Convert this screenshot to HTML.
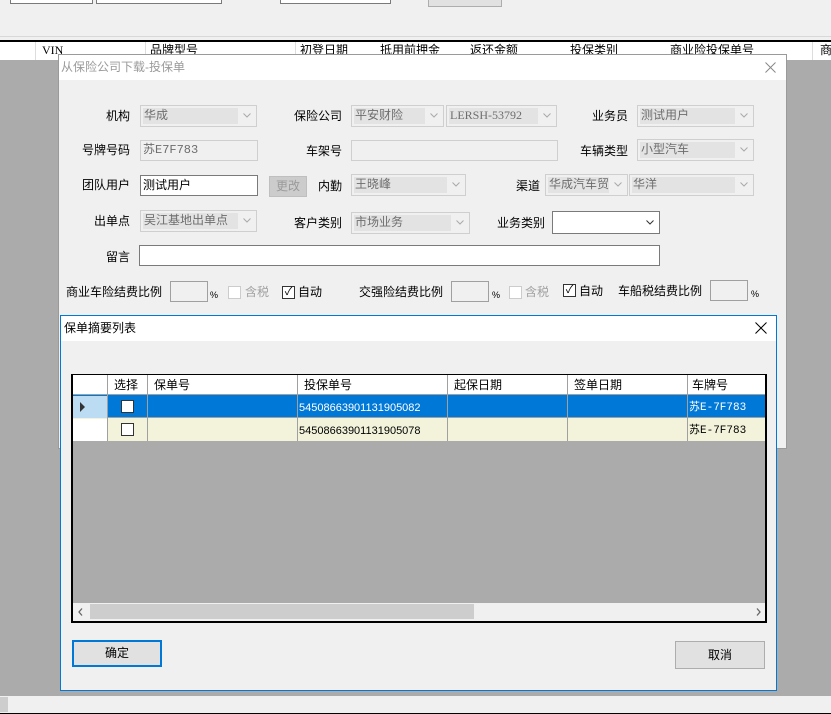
<!DOCTYPE html>
<html><head><meta charset="utf-8"><style>
*{margin:0;padding:0;box-sizing:border-box}
body{width:831px;height:714px;overflow:hidden;background:#ababab;position:relative;font-family:"Liberation Sans","Noto Sans CJK SC",sans-serif;font-size:12px;color:#000}
.a{position:absolute}
.lbl{position:absolute;white-space:nowrap;font-size:12px;line-height:14px}
.cb{position:absolute;height:22px;border:1px solid #cfcfcf;background:#f0f0f0}
.cb .in{position:absolute;left:2px;top:2px;bottom:2px;right:18px;background:#e3e3e3;color:#6d6d6d;padding-left:1px;line-height:15px;white-space:nowrap;overflow:hidden}
.cb svg,.wc svg{position:absolute;right:5px;top:7px}
.tb{position:absolute;height:21px;border:1px solid #cfcfcf;background:#f0f0f0;color:#6d6d6d;padding:2px 2px;line-height:15px}
.chk{position:absolute;width:13px;height:13px;border:1px solid #333;background:#fff}
.chk.d{border-color:#ccc}
.pct{position:absolute;width:38px;height:21px;border:1px solid #a0a0a0;background:#f0f0f0}
.g{position:absolute;top:0;height:100%;border-right:1px solid #a0a0a0}
</style></head><body>
<div class="a" style="left:0;top:0;width:831px;height:40px;background:#f0f0f0"></div>
<div class="a" style="left:10px;top:-1px;width:83px;height:5px;border:1px solid #7a7a7a;background:#fff"></div>
<div class="a" style="left:96px;top:-1px;width:126px;height:5px;border:1px solid #7a7a7a;background:#fff"></div>
<div class="a" style="left:280px;top:-1px;width:111px;height:5px;border:1px solid #7a7a7a;background:#fff"></div>
<div class="a" style="left:428px;top:-1px;width:74px;height:8px;border:1px solid #adadad;background:#e1e1e1"></div>
<div class="a" style="left:0;top:36px;width:831px;height:1px;background:#d8d8d8"></div>
<div class="a" style="left:0;top:40px;width:831px;height:2px;background:#000"></div>
<div class="a" style="left:0;top:42px;width:831px;height:18px;background:#fff;font-size:12px;line-height:16px">
<span class="a" style="left:42px;font-family:'Liberation Serif',serif">VIN</span><span class="a" style="left:150px">品牌型号</span><span class="a" style="left:300px">初登日期</span><span class="a" style="left:380px">抵用前押金</span><span class="a" style="left:470px">返还金额</span><span class="a" style="left:570px">投保类别</span><span class="a" style="left:670px">商业险投保单号</span><span class="a" style="left:820px">商</span>
<div class="a" style="left:35px;top:0;width:1px;height:18px;background:#ddd"></div><div class="a" style="left:145px;top:0;width:1px;height:18px;background:#ddd"></div><div class="a" style="left:295px;top:0;width:1px;height:18px;background:#ddd"></div><div class="a" style="left:812px;top:0;width:1px;height:18px;background:#ddd"></div>
</div>
<div class="a" style="left:58px;top:54px;width:729px;height:395px;border:1px solid #9a9a9a;background:#f0f0f0">
 <div class="a" style="left:0;top:0;width:727px;height:25px;background:#fff"></div>
 <div class="lbl" style="left:2px;top:5px;color:#9a9a9a">从保险公司下载-投保单</div>
 <svg class="a" style="left:706px;top:7px" width="11" height="11"><path d="M0.5 0.5L10.5 10.5M10.5 0.5L0.5 10.5" stroke="#888" stroke-width="1"/></svg>
</div>
<div class="lbl" style="left:106px;top:109px">机构</div>
<div class="cb" style="left:140px;top:105px;width:117px"><div class="in">华成</div><svg width="8" height="5"><path d="M0.5 0.5L4 4L7.5 0.5" stroke="#aaa" fill="none"/></svg></div>
<div class="lbl" style="left:294px;top:109px">保险公司</div>
<div class="cb" style="left:351px;top:105px;width:93px"><div class="in">平安财险</div><svg width="8" height="5"><path d="M0.5 0.5L4 4L7.5 0.5" stroke="#aaa" fill="none"/></svg></div>
<div class="cb" style="left:446px;top:105px;width:111px"><div class="in" style="font-family:'Liberation Serif',serif">LERSH-53792</div><svg width="8" height="5"><path d="M0.5 0.5L4 4L7.5 0.5" stroke="#aaa" fill="none"/></svg></div>
<div class="lbl" style="left:592px;top:109px">业务员</div>
<div class="cb" style="left:637px;top:105px;width:117px"><div class="in">测试用户</div><svg width="8" height="5"><path d="M0.5 0.5L4 4L7.5 0.5" stroke="#aaa" fill="none"/></svg></div>

<div class="lbl" style="left:82px;top:143px">号牌号码</div>
<div class="tb" style="left:140px;top:140px;width:118px;font-family:'Liberation Mono','Noto Sans CJK SC',monospace">苏E7F783</div>
<div class="lbl" style="left:306px;top:144px">车架号</div>
<div class="tb" style="left:351px;top:140px;width:207px"></div>
<div class="lbl" style="left:580px;top:144px">车辆类型</div>
<div class="cb" style="left:637px;top:139px;width:117px"><div class="in">小型汽车</div><svg width="8" height="5"><path d="M0.5 0.5L4 4L7.5 0.5" stroke="#aaa" fill="none"/></svg></div>

<div class="lbl" style="left:82px;top:178px">团队用户</div>
<div class="tb" style="left:140px;top:175px;width:118px;border-color:#7a7a7a;background:#fff;color:#000">测试用户</div>
<div class="a" style="left:269px;top:176px;width:38px;height:21px;background:#ccc;border:1px solid #bfbfbf;color:#9a9a9a;text-align:center;line-height:18px">更改</div>
<div class="lbl" style="left:318px;top:179px">内勤</div>
<div class="cb" style="left:351px;top:174px;width:115px"><div class="in">王晓峰</div><svg width="8" height="5"><path d="M0.5 0.5L4 4L7.5 0.5" stroke="#aaa" fill="none"/></svg></div>
<div class="lbl" style="left:516px;top:179px">渠道</div>
<div class="cb" style="left:545px;top:174px;width:83px"><div class="in">华成汽车贸</div><svg width="8" height="5"><path d="M0.5 0.5L4 4L7.5 0.5" stroke="#aaa" fill="none"/></svg></div>
<div class="cb" style="left:629px;top:174px;width:125px"><div class="in">华洋</div><svg width="8" height="5"><path d="M0.5 0.5L4 4L7.5 0.5" stroke="#aaa" fill="none"/></svg></div>

<div class="lbl" style="left:94px;top:214px">出单点</div>
<div class="cb" style="left:140px;top:210px;width:117px"><div class="in">吴江基地出单点</div><svg width="8" height="5"><path d="M0.5 0.5L4 4L7.5 0.5" stroke="#aaa" fill="none"/></svg></div>
<div class="lbl" style="left:294px;top:216px">客户类别</div>
<div class="cb" style="left:351px;top:212px;width:119px"><div class="in">市场业务</div><svg width="8" height="5"><path d="M0.5 0.5L4 4L7.5 0.5" stroke="#aaa" fill="none"/></svg></div>
<div class="lbl" style="left:497px;top:216px">业务类别</div>
<div class="a wc" style="left:552px;top:211px;width:108px;height:23px;border:1px solid #7a7a7a;background:#fff"><svg width="8" height="5" style="top:8px"><path d="M0.5 0.5L4 4L7.5 0.5" stroke="#333" fill="none"/></svg></div>

<div class="lbl" style="left:106px;top:250px">留言</div>
<div class="a" style="left:139px;top:245px;width:521px;height:21px;border:1px solid #7a7a7a;background:#fff"></div>

<div class="lbl" style="left:66px;top:285px">商业车险结费比例</div>
<div class="pct" style="left:170px;top:281px"></div>
<div class="lbl" style="left:210px;top:288px;font-size:9px">%</div>
<div class="chk d" style="left:228px;top:286px"></div>
<div class="lbl" style="left:245px;top:285px;color:#a0a0a0">含税</div>
<div class="chk" style="left:282px;top:286px;font-size:11px;line-height:11px;text-align:center">✓</div>
<div class="lbl" style="left:298px;top:285px">自动</div>
<div class="lbl" style="left:359px;top:285px">交强险结费比例</div>
<div class="pct" style="left:451px;top:281px"></div>
<div class="lbl" style="left:492px;top:288px;font-size:9px">%</div>
<div class="chk d" style="left:509px;top:286px"></div>
<div class="lbl" style="left:525px;top:285px;color:#a0a0a0">含税</div>
<div class="chk" style="left:563px;top:284px;font-size:11px;line-height:11px;text-align:center">✓</div>
<div class="lbl" style="left:579px;top:284px">自动</div>
<div class="lbl" style="left:618px;top:284px">车船税结费比例</div>
<div class="pct" style="left:710px;top:280px"></div>
<div class="lbl" style="left:751px;top:287px;font-size:9px">%</div>

<div class="a" style="left:60px;top:315px;width:717px;height:376px;border:1px solid #0078d7;background:#f0f0f0">
 <div class="a" style="left:0;top:0;width:715px;height:25px;background:#fff"></div>
 <div class="lbl" style="left:3px;top:5px;color:#000">保单摘要列表</div>
 <svg class="a" style="left:694px;top:6px" width="12" height="12"><path d="M0.5 0.5L11.5 11.5M11.5 0.5L0.5 11.5" stroke="#000" stroke-width="1"/></svg>
</div>
<div class="a" style="left:71px;top:374px;width:696px;height:249px;border:1px solid #000;border-width:1px 2px 2px 2px;background:#ababab">
 <div class="a" style="left:0;top:0;width:692px;height:66px;overflow:hidden">
  <div class="a" style="left:0;top:0;width:694px;height:20px;background:#fff;border-bottom:1px solid #a0a0a0"></div>
  <div class="a" style="left:0;top:20px;width:694px;height:23px;background:#0078d7;border-bottom:1px solid #a0a0a0"></div>
  <div class="a" style="left:0;top:43px;width:694px;height:23px;background:#f3f3dc"></div>
  <div class="a" style="left:0;top:21px;width:35px;height:22px;background:#bcdcf4"></div>
  <div class="a" style="left:0;top:44px;width:35px;height:22px;background:#fff"></div>
  <div class="a" style="left:7px;top:27px;width:0;height:0;border-left:5px solid #333;border-top:5px solid transparent;border-bottom:5px solid transparent"></div>
  <div class="g" style="left:0;width:35px"></div>
  <div class="g" style="left:35px;width:40px"></div>
  <div class="g" style="left:75px;width:150px"></div>
  <div class="g" style="left:225px;width:150px"></div>
  <div class="g" style="left:375px;width:120px"></div>
  <div class="g" style="left:495px;width:120px"></div>
  <div class="lbl" style="left:41px;top:3px">选择</div>
  <div class="lbl" style="left:81px;top:3px">保单号</div>
  <div class="lbl" style="left:231px;top:3px">投保单号</div>
  <div class="lbl" style="left:381px;top:3px">起保日期</div>
  <div class="lbl" style="left:501px;top:3px">签单日期</div>
  <div class="lbl" style="left:619px;top:3px">车牌号</div>
  <div class="chk" style="left:48px;top:25px"></div>
  <div class="chk" style="left:48px;top:48px"></div>
  <div class="lbl" style="left:226px;top:26px;color:#fff;font-size:11px">54508663901131905082</div>
  <div class="lbl" style="left:226px;top:49px;font-size:11px">54508663901131905078</div>
  <div class="lbl" style="left:616px;top:26px;color:#fff;font-family:'Liberation Mono','Noto Sans CJK SC',monospace;font-size:11px">苏E-7F783</div>
  <div class="lbl" style="left:616px;top:49px;font-family:'Liberation Mono','Noto Sans CJK SC',monospace;font-size:11px">苏E-7F783</div>
 </div>
 <div class="a" style="left:0;top:228px;width:692px;height:18px;background:#f0f0f0">
  <div class="a" style="left:17px;top:1px;width:384px;height:15px;background:#cdcdcd"></div>
  <svg class="a" style="left:5px;top:5px" width="5" height="8"><path d="M4 0.5L1 4L4 7.5" stroke="#666" fill="none" stroke-width="1.3"/></svg>
  <svg class="a" style="left:683px;top:5px" width="5" height="8"><path d="M1 0.5L4 4L1 7.5" stroke="#666" fill="none" stroke-width="1.3"/></svg>
 </div>
</div>
<div class="a" style="left:72px;top:640px;width:90px;height:27px;border:2px solid #0078d7;background:#e1e1e1;text-align:center;line-height:23px">确定</div>
<div class="a" style="left:675px;top:641px;width:90px;height:28px;border:1px solid #adadad;background:#e1e1e1;text-align:center;line-height:26px">取消</div>
<div class="a" style="left:0;top:696px;width:831px;height:17px;background:#f0f0f0"></div>
<div class="a" style="left:0;top:697px;width:8px;height:15px;background:#cdcdcd"></div>
<div class="a" style="left:0;top:713px;width:831px;height:1px;background:#000"></div>
</body></html>
